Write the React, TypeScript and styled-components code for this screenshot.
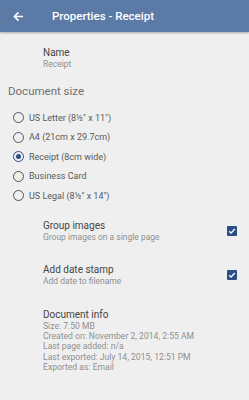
import React from "react";
import styled, { createGlobalStyle } from "styled-components";

const GlobalStyle = createGlobalStyle`
  html, body { margin: 0; padding: 0; background: #efefef; }
  body { font-family: Roboto, "Noto Sans", sans-serif; }
`;

const Page = styled.div`
  width: 249px;
  height: 400px;
  background: #efefef;
  overflow: hidden;
`;

const Toolbar = styled.div`
  height: 32px;
  background: #5b7ba6;
  display: flex;
  align-items: center;
  box-shadow: 0 1px 2px rgba(0, 0, 0, 0.3);
  position: relative;
`;

const BackButton = styled.div`
  width: 36px;
  display: flex;
  justify-content: center;
`;

const Title = styled.div`
  margin-left: 16px;
  color: #fff;
  font-size: 11.5px;
  font-weight: 500;
`;

const Body = styled.div`
  display: flex;
  flex-direction: column;
`;

const Indented = styled.div<{ $top?: number }>`
  padding-left: 43px;
  padding-right: 12px;
  margin-top: ${(p) => p.$top ?? 0}px;
  display: flex;
  align-items: center;
`;

const TextBlock = styled.div`
  flex: 1;
  display: flex;
  flex-direction: column;
`;

const Label = styled.div`
  font-size: 10px;
  color: #444;
  line-height: 13px;
`;

const Sub = styled.div`
  font-size: 8.5px;
  color: #8f8f8f;
  line-height: 11px;
`;

const SectionHeader = styled.div`
  padding-left: 8px;
  margin-top: 14px;
  font-size: 11.5px;
  color: #707070;
`;

const RadioList = styled.div`
  display: flex;
  flex-direction: column;
  margin-top: 10px;
`;

const RadioRow = styled.div`
  height: 19.5px;
  display: flex;
  align-items: center;
  padding-left: 13px;
`;

const RadioCircle = styled.div<{ $on?: boolean }>`
  width: 9px;
  height: 9px;
  border-radius: 50%;
  border: 1.3px solid ${(p) => (p.$on ? "#2c4f86" : "#555")};
  display: flex;
  align-items: center;
  justify-content: center;
  &::after {
    content: "";
    width: 5px;
    height: 5px;
    border-radius: 50%;
    background: ${(p) => (p.$on ? "#2c4f86" : "transparent")};
  }
`;

const RadioLabel = styled.div`
  margin-left: 5px;
  font-size: 9px;
  color: #5a5a5a;
`;

const Check = styled.div`
  width: 10px;
  height: 10px;
  background: #2c4f86;
  border-radius: 1px;
  display: flex;
  align-items: center;
  justify-content: center;
`;

const InfoLine = styled.div`
  font-size: 8.6px;
  color: #8f8f8f;
  line-height: 10.4px;
`;

const sizes = [
  "US Letter (8½\" x 11\")",
  "A4 (21cm x 29.7cm)",
  "Receipt (8cm wide)",
  "Business Card",
  "US Legal (8½\" x 14\")",
];

const CheckMark = () => (
  <Check>
    <svg width="8" height="8" viewBox="0 0 8 8">
      <path d="M1.2 4.2 L3.1 6 L6.8 2" stroke="#fff" strokeWidth="1.3" fill="none" />
    </svg>
  </Check>
);

export default function App() {
  return (
    <Page>
      <GlobalStyle />
      <Toolbar>
        <BackButton>
          <svg width="11" height="11" viewBox="0 0 12 12">
            <path d="M11 6 H2 M6 1.5 L1.5 6 L6 10.5" stroke="#fff" strokeWidth="1.6" fill="none" />
          </svg>
        </BackButton>
        <Title>Properties - Receipt</Title>
      </Toolbar>
      <Body>
        <Indented $top={14}>
          <TextBlock>
            <Label>Name</Label>
            <Sub>Receipt</Sub>
          </TextBlock>
        </Indented>
        <SectionHeader>Document size</SectionHeader>
        <RadioList>
          {sizes.map((s, i) => (
            <RadioRow key={s}>
              <RadioCircle $on={i === 2} />
              <RadioLabel>{s}</RadioLabel>
            </RadioRow>
          ))}
        </RadioList>
        <Indented $top={13}>
          <TextBlock>
            <Label>Group images</Label>
            <Sub>Group images on a single page</Sub>
          </TextBlock>
          <CheckMark />
        </Indented>
        <Indented $top={20}>
          <TextBlock>
            <Label>Add date stamp</Label>
            <Sub>Add date to filename</Sub>
          </TextBlock>
          <CheckMark />
        </Indented>
        <Indented $top={21}>
          <TextBlock>
            <Label>Document info</Label>
            <InfoLine>Size: 7.50 MB</InfoLine>
            <InfoLine>Created on: November 2, 2014, 2:55 AM</InfoLine>
            <InfoLine>Last page added: n/a</InfoLine>
            <InfoLine>Last exported: July 14, 2015, 12:51 PM</InfoLine>
            <InfoLine>Exported as: Email</InfoLine>
          </TextBlock>
        </Indented>
      </Body>
    </Page>
  );
}
